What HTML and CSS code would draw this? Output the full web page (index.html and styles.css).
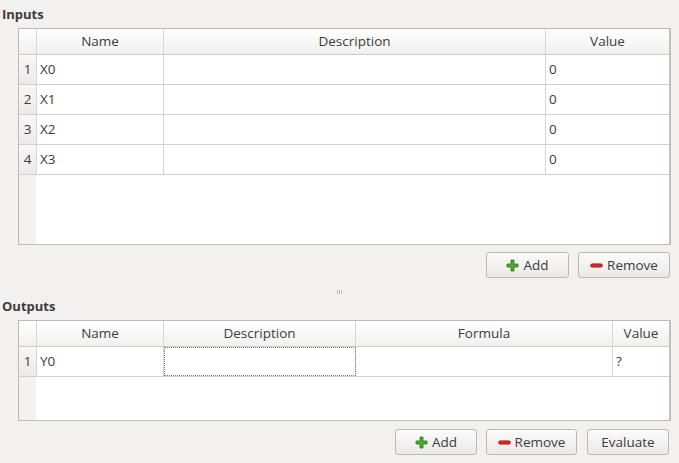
FILE: index.html
```html
<!DOCTYPE html>
<html>
<head>
<meta charset="utf-8">
<link rel="stylesheet" href="styles.css">
</head>
<body>
<div class="page">
  <div class="label">Inputs</div>
  <div class="frame frame-in">
    <div class="row head">
      <div class="cell corner"></div>
      <div class="cell c-name">Name</div>
      <div class="cell c-desc">Description</div>
      <div class="cell c-val">Value</div>
    </div>
    <div class="row">
      <div class="cell corner num">1</div>
      <div class="cell c-name">X0</div>
      <div class="cell c-desc"></div>
      <div class="cell c-val">0</div>
    </div>
    <div class="row">
      <div class="cell corner num">2</div>
      <div class="cell c-name">X1</div>
      <div class="cell c-desc"></div>
      <div class="cell c-val">0</div>
    </div>
    <div class="row">
      <div class="cell corner num">3</div>
      <div class="cell c-name">X2</div>
      <div class="cell c-desc"></div>
      <div class="cell c-val">0</div>
    </div>
    <div class="row">
      <div class="cell corner num">4</div>
      <div class="cell c-name">X3</div>
      <div class="cell c-desc"></div>
      <div class="cell c-val">0</div>
    </div>
  </div>
  <div class="buttons buttons-in">
    <button class="btn w-add"><svg class="ico" width="13" height="13" viewBox="0 0 13 13"><path d="M5 1h3v4h4v3H8v4H5V8H1V5h4z" fill="#4caa2a" stroke="#2f7a17" stroke-width="0.8"/></svg>Add</button>
    <button class="btn w-rem"><svg class="ico" width="13" height="13" viewBox="0 0 13 13"><rect x="0.5" y="4.8" width="12" height="3.4" rx="1.7" fill="#d8262b" stroke="#a3151a" stroke-width="0.6"/></svg>Remove</button>
  </div>
  <div class="splitter"><span class="grip"></span><span class="grip"></span><span class="grip"></span></div>
  <div class="label label-out">Outputs</div>
  <div class="frame frame-out">
    <div class="row head">
      <div class="cell corner"></div>
      <div class="cell c-name">Name</div>
      <div class="cell o-desc">Description</div>
      <div class="cell o-form">Formula</div>
      <div class="cell o-val">Value</div>
    </div>
    <div class="row">
      <div class="cell corner num">1</div>
      <div class="cell c-name">Y0</div>
      <div class="cell o-desc focus"></div>
      <div class="cell o-form"></div>
      <div class="cell o-val">?</div>
    </div>
  </div>
  <div class="buttons buttons-out">
    <button class="btn w-add2"><svg class="ico" width="13" height="13" viewBox="0 0 13 13"><path d="M5 1h3v4h4v3H8v4H5V8H1V5h4z" fill="#4caa2a" stroke="#2f7a17" stroke-width="0.8"/></svg>Add</button>
    <button class="btn w-rem2"><svg class="ico" width="13" height="13" viewBox="0 0 13 13"><rect x="0.5" y="4.8" width="12" height="3.4" rx="1.7" fill="#d8262b" stroke="#a3151a" stroke-width="0.6"/></svg>Remove</button>
    <button class="btn w-eval">Evaluate</button>
  </div>
</div>
</body>
</html>
```
FILE: styles.css
```css
html, body {
  margin: 0;
  padding: 0;
  background: #f2f1f0;
}
body {
  font-family: "Open Sans", "DejaVu Sans", sans-serif;
  font-size: 13.5px;
  color: #3c3c3c;
  width: 679px;
  height: 463px;
  overflow: hidden;
}
.page {
  display: flex;
  flex-direction: column;
}
.label {
  box-sizing: border-box;
  height: 28px;
  padding: 6px 0 0 2px;
  line-height: 16px;
  font-weight: bold;
  font-size: 13px;
}
.label-out {
  height: 22px;
  padding-top: 0;
}
.frame {
  box-sizing: border-box;
  margin-left: 18px;
  width: 653px;
  border: 1px solid #bdbab6;
  border-right: 2px solid #c3c0bc;
  background: linear-gradient(to right, #f2f1f0 17px, #ffffff 17px);
}
.frame-in { height: 217px; }
.frame-out { height: 101px; }
.row {
  display: flex;
  height: 30px;
  box-sizing: border-box;
  border-bottom: 1px solid #d3d1ce;
  background: #fff;
}
.row.head {
  height: 26px;
  background: linear-gradient(to bottom, #ffffff, #f1f0ef);
  border-bottom: 1px solid #cfccc8;
}
.cell {
  box-sizing: border-box;
  border-right: 1px solid #d8d6d3;
  padding-left: 3px;
  line-height: 29px;
  white-space: nowrap;
  overflow: hidden;
}
.head .cell {
  text-align: center;
  padding-left: 0;
  line-height: 25px;
}
.corner {
  width: 18px;
  padding-left: 0;
  text-align: center;
  background: linear-gradient(to bottom, #f8f7f6, #eceae8);
}
.head .corner {
  background: transparent;
}
.c-name { width: 127px; }
.c-desc { width: 382px; }
.c-val { flex: 1; border-right: none; }
.o-desc { width: 192px; }
.o-form { width: 257px; }
.o-val { flex: 1; border-right: none; }
.focus {
  outline: 1px dotted #7a7a7a;
  outline-offset: -1px;
}
.buttons {
  display: flex;
  justify-content: flex-end;
  gap: 9px;
}
.buttons-in {
  margin-top: 7px;
  padding-right: 9px;
}
.buttons-out {
  margin-top: 8px;
  padding-right: 10px;
}
.btn {
  box-sizing: border-box;
  height: 26px;
  border: 1px solid #bcb8b4;
  border-radius: 3px;
  background: linear-gradient(to bottom, #fbfbfb, #ebe9e7);
  font-family: inherit;
  font-size: 13.5px;
  color: #3c3c3c;
  display: flex;
  align-items: center;
  justify-content: center;
  gap: 4px;
  padding: 0;
}
.ico { display: block; }
.w-add { width: 83px; }
.w-rem { width: 92px; }
.w-add2 { width: 82px; }
.w-rem2 { width: 91px; }
.w-eval { width: 82px; margin-left: 1px; }
.splitter {
  height: 20px;
  display: flex;
  justify-content: center;
  align-items: flex-start;
  gap: 1px;
  padding-top: 12px;
  box-sizing: border-box;
}
.grip {
  width: 1px;
  height: 4px;
  background: #bdbab6;
}
```
